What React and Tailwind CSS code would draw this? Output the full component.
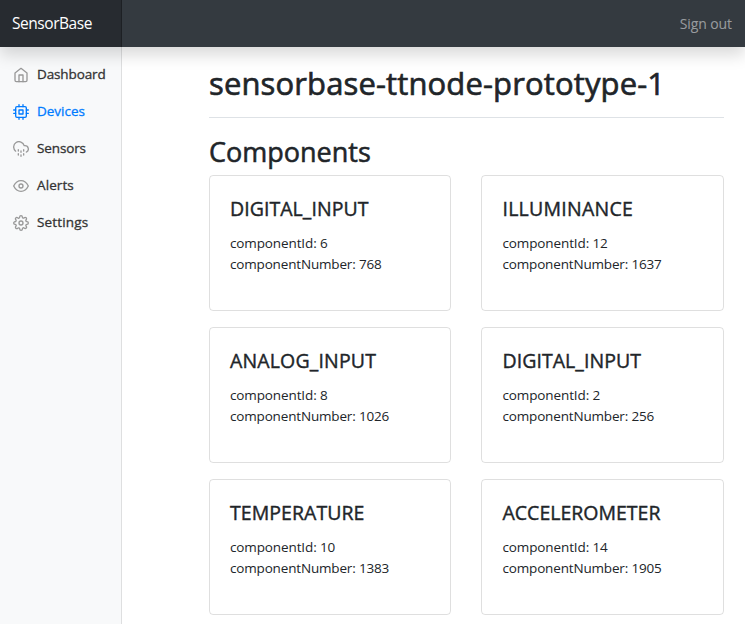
import { FiHome, FiCpu, FiCloudDrizzle, FiEye, FiSettings } from "react-icons/fi";

const navItems = [
  { label: "Dashboard", Icon: FiHome, track: "tracking-[-0.12px]" },
  { label: "Devices", Icon: FiCpu, active: true, track: "tracking-[-0.02px]" },
  { label: "Sensors", Icon: FiCloudDrizzle, track: "tracking-[-0.12px]" },
  { label: "Alerts", Icon: FiEye, track: "tracking-[0.1px]" },
  { label: "Settings", Icon: FiSettings, track: "tracking-[0.15px]" },
];

const components = [
  { name: "DIGITAL_INPUT", id: 6, number: 768, track: "tracking-[0.05px]" },
  { name: "ILLUMINANCE", id: 12, number: 1637, track: "tracking-[0.25px]" },
  { name: "ANALOG_INPUT", id: 8, number: 1026, track: "tracking-[0.15px]" },
  { name: "DIGITAL_INPUT", id: 2, number: 256, track: "tracking-[0.05px]" },
  { name: "TEMPERATURE", id: 10, number: 1383, track: "tracking-[0.05px]" },
  { name: "ACCELEROMETER", id: 14, number: 1905, track: "tracking-[0px]" },
];

function Header() {
  return (
    <header className="relative z-10 flex h-[47px] shrink-0 items-stretch justify-between bg-[#343a40] shadow-[0_8px_16px_rgba(0,0,0,0.15)]">
      <a className="flex w-[122px] items-center bg-black/25 pt-px pl-3 text-[15.5px] text-white shadow-[inset_-1px_0_0_rgba(0,0,0,0.25)]">
        <span className="tracking-[-0.45px]">SensorBase</span>
      </a>
      <a className="flex items-center pr-[13px] text-[14px] text-white/50">
        <span className="tracking-[-0.1px]">Sign out</span>
      </a>
    </header>
  );
}

function Sidebar() {
  return (
    <nav className="w-[122px] shrink-0 bg-[#f8f9fa] pt-[9px] shadow-[inset_-1px_0_0_rgba(0,0,0,0.1)]">
      <ul>
        {navItems.map(({ label, Icon, active, track }) => (
          <li
            key={label}
            className={`flex h-[37px] items-center gap-2 pl-[13px] text-[13.5px] ${active ? "text-[#007bff]" : "text-[#333]"}`}
          >
            <Icon className={`size-4 ${active ? "" : "text-[#999]"}`} />
            <span className={`[-webkit-text-stroke:0.3px_currentColor] ${track}`}>{label}</span>
          </li>
        ))}
      </ul>
    </nav>
  );
}

function ComponentCard({ name, id, number, track }) {
  return (
    <article className="h-[136px] rounded border border-black/[0.125] pt-[21px] pl-5 even:pl-[20.5px]">
      <h5 className={`mb-[12px] text-[19.5px] leading-6 [-webkit-text-stroke:0.4px_currentColor] ${track}`}>
        {name}
      </h5>
      <p className="text-[13.5px] leading-[21px] tracking-[-0.12px]">componentId: {id}</p>
      <p className="text-[13.5px] leading-[21px] tracking-[-0.17px]">componentNumber: {number}</p>
    </article>
  );
}

export default function App() {
  return (
    <div className="flex h-[624px] w-[745px] flex-col overflow-hidden bg-white font-['Open_Sans','Noto_Sans',sans-serif] text-[#212529]">
      <Header />
      <div className="flex min-h-0 flex-1">
        <Sidebar />
        <main className="w-[602px] pt-[17px] pl-[87px]">
          <div className="border-b border-[#dee2e6] pb-[15px]">
            <h1 className="text-[31px] leading-[38px] tracking-[0.13px] [-webkit-text-stroke:0.65px_currentColor]">
              sensorbase-ttnode-prototype-1
            </h1>
          </div>
          <h2 className="mt-[17px] mb-[6px] text-[27px] leading-[34px] [-webkit-text-stroke:0.55px_currentColor]">
            Components
          </h2>
          <section className="grid grid-cols-[242px_243px] gap-x-[30px] gap-y-4">
            {components.map((c) => (
              <ComponentCard key={c.number} {...c} />
            ))}
          </section>
        </main>
      </div>
    </div>
  );
}
